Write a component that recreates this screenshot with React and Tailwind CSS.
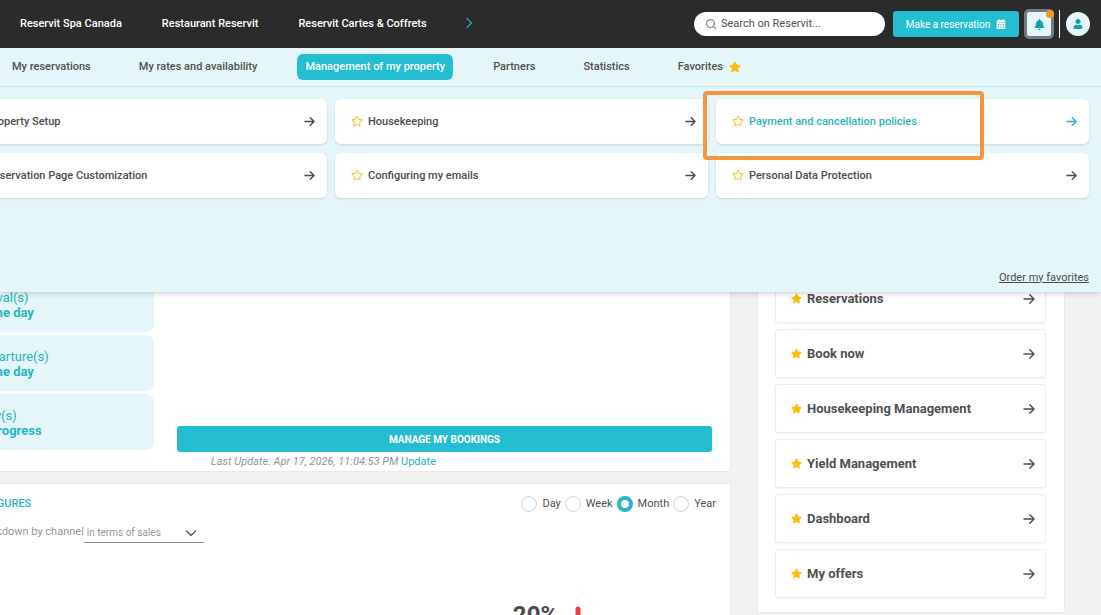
import React, { useState } from "react";
import { FaBell, FaCalendarAlt, FaRegStar, FaStar, FaUser } from "react-icons/fa";
import { Search } from "lucide-react";

const properties = ["Reservit Spa Canada", "Restaurant Reservit", "Reservit Cartes & Coffrets"];

const navItems = [
  "My reservations",
  "My rates and availability",
  "Management of my property",
  "Partners",
  "Statistics",
];

const menuCards = [
  { label: "Property Setup" },
  { label: "Housekeeping" },
  { label: "Payment and cancellation policies", highlighted: true },
  { label: "Reservation Page Customization" },
  { label: "Configuring my emails" },
  { label: "Personal Data Protection" },
];

const stats = [
  { label: "Arrival(s)", detail: "of the day" },
  { label: "Departure(s)", detail: "of the day" },
  { label: "Stay(s)", detail: "in progress" },
];

const shortcuts = [
  "Reservations",
  "Book now",
  "Housekeeping Management",
  "Yield Management",
  "Dashboard",
  "My offers",
];

const periods = ["Day", "Week", "Month", "Year"];

const Arrow = ({ className }) => (
  <svg viewBox="0 0 12 12" className={className} fill="none" stroke="currentColor" strokeWidth="1.5" strokeLinecap="round" strokeLinejoin="round">
    <path d="M1 6h10M6.8 1.8 11 6l-4.2 4.2" />
  </svg>
);

const Chevron = ({ className }) => (
  <svg viewBox="0 0 12 12" className={className} fill="none" stroke="currentColor" strokeWidth="1.2" strokeLinecap="round" strokeLinejoin="round">
    <path d="M4 1.5 8.5 6 4 10.5" />
  </svg>
);

const TopBar = () => {
  const [query, setQuery] = useState("");

  return (
    <div className="flex h-12 items-center justify-between bg-[#2b2b2b] pr-[11px] pl-5">
      <div className="flex items-center gap-10 text-[11px] font-medium whitespace-nowrap text-white">
        {properties.map((name) => (
          <a key={name} href="#">{name}</a>
        ))}
        <button aria-label="Next properties" className="-ml-1 pb-[2px] text-[#25a9b9]">
          <Chevron className="size-3" />
        </button>
      </div>

      <div className="flex items-center">
        <label className="flex h-6 w-[191px] items-center gap-1 rounded-full bg-white px-[11px]">
          <Search className="size-3 shrink-0 text-[#8a8a8a]" strokeWidth={2.5} />
          <input
            type="text"
            aria-label="Search on Reservit"
            placeholder="Search on Reservit..."
            className="w-full min-w-0 bg-transparent text-[11px] text-[#505050] outline-none placeholder:text-[#505050]"
            value={query}
            onChange={(e) => setQuery(e.target.value)}
          />
        </label>
        <button className="ml-2 flex h-[26px] w-[126px] items-center justify-center gap-[6px] rounded-[3px] bg-[#25bed0] text-[10px] whitespace-nowrap text-white">
          Make a reservation
          <FaCalendarAlt className="size-[10px]" />
        </button>
        <button aria-label="Notifications" className="relative ml-[5px] flex size-[30px] items-center justify-center rounded-[5px] border-3 border-[#737c7e] bg-[#e4f6f9] text-[#129fb0]">
          <FaBell className="size-[11px]" />
          <span className="absolute -top-[2px] -right-[3px] size-2 rounded-full bg-[#f09a24]" />
        </button>
        <div className="ml-[5px] h-7 w-px bg-white" />
        <button aria-label="Account" className="ml-[6px] flex size-6 items-center justify-center rounded-full bg-[#e4f6f9] text-[#129fb0]">
          <FaUser className="size-[10px]" />
        </button>
      </div>
    </div>
  );
};

const MegaMenu = () => (
  <div className="absolute inset-x-0 top-full z-10 flex min-h-[205px] flex-col justify-between bg-[#e4f6f9] pt-3 pr-3 pb-[6px] shadow-md">
    <div className="-ml-[46px] grid grid-cols-3 gap-x-2 gap-y-[9px]">
      {menuCards.map(({ label, highlighted }) => (
        <div key={label} className="relative">
          <div className={`flex h-[45px] items-center rounded-md bg-white pr-3 pl-4 text-[11px] font-medium shadow-sm ${highlighted ? "text-[#25b5c6]" : "text-[#4c4c4c]"}`}>
            <button aria-label={`Add ${label} to favorites`} className="mr-[5px] flex pb-[2px] text-[#f5c431]">
              <FaRegStar className="size-3" />
            </button>
            <a href="#" className="flex flex-1 items-center justify-between">
              <span className="pt-px">{label}</span>
              <Arrow className="mb-px size-[11px]" />
            </a>
          </div>
          {highlighted && (
            <div className="pointer-events-none absolute -top-2 right-[105px] -bottom-4 -left-[13px] z-10 rounded-[4px] border-4 border-[#f59540]" />
          )}
        </div>
      ))}
    </div>
    <a href="#" className="self-end text-[11px] text-[#4c4c4c] underline">Order my favorites</a>
  </div>
);

const Header = () => (
  <header className="relative z-20">
    <TopBar />
    <nav className="flex h-[39px] items-start gap-8 border-b border-[#bfe9ee] bg-[#e4f6f9] px-1 pt-[6px] text-[11px] font-medium whitespace-nowrap text-[#505050]">
      {navItems.map((item) => (
        <a
          key={item}
          href="#"
          className={`flex h-[26px] items-center rounded-md px-2 ${item === "Management of my property" ? "bg-[#25bed0] text-white" : ""}`}
        >
          {item}
        </a>
      ))}
      <a href="#" className="flex h-[26px] items-center gap-[6px] px-2">
        Favorites
        <FaStar className="size-3 text-[#fcbc12]" />
      </a>
    </nav>
    <MegaMenu />
  </header>
);

const Bookings = () => (
  <section className="flex min-h-[373px] items-end rounded-[3px] border border-[#eaeaea] bg-white pr-[18px] pl-[15px]">
    <div className="mb-[21px] flex w-[186px] flex-col gap-[3px]">
      {stats.map(({ label, detail }) => (
        <div key={label} className="flex h-14 flex-col justify-center rounded-lg bg-[#e4f6f9] px-2 pt-px text-[13px] leading-[15px] text-[#25b5c6]">
          <span>{label}</span>
          <span className="font-bold">{detail}</span>
        </div>
      ))}
    </div>
    <div className="ml-[23px] flex flex-1 flex-col">
      <button className="h-[26px] rounded-[3px] bg-[#25bed0] text-[10px] font-bold text-white">MANAGE MY BOOKINGS</button>
      <p className="pl-[34px] text-[11px] leading-[19px] text-[#969696]">
        <i>Last Update: Apr 17, 2026, 11:04:53 PM</i>{" "}
        <a href="#" className="text-[#25b5c6]">Update</a>
      </p>
    </div>
  </section>
);

const Figures = () => {
  const [period, setPeriod] = useState("Month");

  return (
    <section className="flex-1 rounded-[3px] border border-[#eaeaea] bg-white pt-3 pr-[14px] pl-3 whitespace-nowrap">
      <div className="flex items-center justify-between">
        <h2 className="text-[11px] font-medium text-[#25b5c6]">KEY FIGURES</h2>
        <div className="flex gap-1 text-[11px] text-[#505050]">
          {periods.map((item) => (
            <label key={item} className="flex items-center gap-[5px]">
              <input
                type="radio"
                name="period"
                className="size-4 appearance-none rounded-full border border-[#d0d4d9] bg-white checked:border-4 checked:border-[#25b5c6]"
                checked={period === item}
                onChange={() => setPeriod(item)}
              />
              {item}
            </label>
          ))}
        </div>
      </div>
      <div className="mt-[10px] flex items-center pl-[9px] text-[11px] text-[#969696]">
        <label htmlFor="breakdown">Breakdown by channel</label>
        <div className="relative">
          <select id="breakdown" className="h-5 w-[120px] appearance-none border-b border-[#8c8c8c] bg-transparent pl-[3px] text-[10px] outline-none">
            <option>in terms of sales</option>
          </select>
          <Chevron className="pointer-events-none absolute top-1 right-[7px] size-3 rotate-90 text-[#505050]" />
        </div>
      </div>
      <div className="mt-[60px] flex items-start justify-center gap-[10px] pl-[420px] text-2xl leading-6 font-bold text-[#4c4c4c]">
        20%
        <svg viewBox="0 0 20 28" className="mt-[3px] h-7 w-5" fill="none" stroke="#ee3e3e" strokeWidth="5" strokeLinecap="round" strokeLinejoin="round">
          <path d="M10 3v22M3 18l7 7 7-7" />
        </svg>
      </div>
    </section>
  );
};

const Shortcuts = () => (
  <aside className="flex min-h-[514px] flex-col justify-end gap-[6px] self-start rounded-[3px] border border-[#eaeaea] bg-white pr-[18px] pb-[14px] pl-[17px]">
    {shortcuts.map((label) => (
      <a
        key={label}
        href="#"
        className="flex h-[49px] items-center rounded-[3px] border border-[#ececec] pr-[10px] pl-[15px] text-[13px] font-bold text-[#505050] shadow-xs"
      >
        <FaStar className="mr-[5px] size-[11px] text-[#fcbc12]" />
        <span className="flex-1">{label}</span>
        <Arrow className="size-3" />
      </a>
    ))}
  </aside>
);

const App = () => {
  return (
    <div className="flex h-screen flex-col overflow-hidden bg-[#f2f2f2] font-['Roboto',sans-serif]">
      <Header />
      <main className="-ml-12 grid min-h-0 flex-1 grid-cols-[minmax(0,1fr)_308px] gap-[26px] pt-3 pr-9">
        <div className="flex min-h-0 flex-col gap-[11px]">
          <Bookings />
          <Figures />
        </div>
        <Shortcuts />
      </main>
    </div>
  );
};

export default App;
